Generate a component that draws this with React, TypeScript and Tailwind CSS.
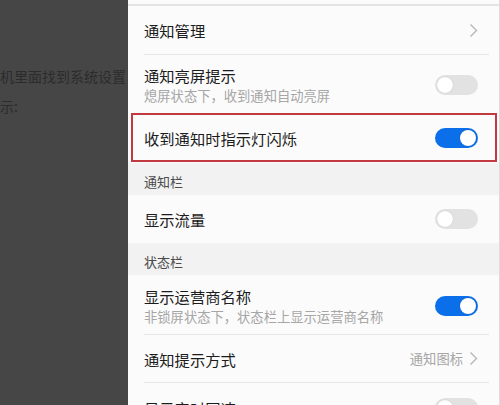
import { ReactNode } from 'react'

const font = { fontFamily: '"Noto Sans CJK SC", "Noto Sans", sans-serif' }

function Toggle({ on }: { on?: boolean }) {
  return (
    <div
      className={`relative w-[43px] h-[20px] rounded-full shrink-0 ${on ? 'bg-[#0b6fe9]' : 'bg-[#e2e2e2]'}`}
    >
      <div
        className={`absolute top-[2px] w-[16px] h-[16px] rounded-full bg-white shadow-[0_0_1px_rgba(0,0,0,0.25)] ${on ? 'right-[2px]' : 'left-[2px]'}`}
      />
    </div>
  )
}

function Chevron() {
  return (
    <svg width="9" height="15" viewBox="0 0 9 15" className="shrink-0">
      <polyline points="1.5,1.5 7.5,7.5 1.5,13.5" fill="none" stroke="#b4b4b4" strokeWidth="1.3" />
    </svg>
  )
}

function Divider() {
  return <div className="shrink-0 ml-4 mr-[10px] h-px bg-[#e6e6e6]" />
}

function Row({
  title,
  sub,
  right,
  className
}: {
  title: string
  sub?: string
  right: ReactNode
  className?: string
}) {
  return (
    <div className={`shrink-0 flex items-center justify-between pl-4 pr-[21px] ${className ?? ''}`}>
      <div className="flex flex-col">
        <span className="text-[15.3px] leading-[20px] text-[#1c1c1c]">{title}</span>
        {sub && <span className="text-[13.3px] leading-[18px] mt-[2px] text-[#a6a6a6]">{sub}</span>}
      </div>
      {right}
    </div>
  )
}

function Section({ label }: { label: string }) {
  return (
    <div className="shrink-0 h-[32px] bg-[#f2f2f2] pl-4 pt-[10px] text-[13px] leading-[18px] text-[#4a4a4a]">
      {label}
    </div>
  )
}

export default function App() {
  return (
    <div className="flex w-[500px] h-[405px] overflow-hidden" style={font}>
      <div className="w-[128px] shrink-0 bg-[#464646] overflow-hidden text-[14px] text-[#2c2c2c] whitespace-nowrap">
        <div className="mt-[66px] leading-[20px]">机里面找到系统设置</div>
        <div className="mt-[10px] leading-[20px]">示:</div>
      </div>

      <div className="flex-1 bg-[#fbfbfb] flex flex-col border-r border-[#dcdcdc]">
        <div className="shrink-0 h-[4px]" />
        <div className="shrink-0 h-[2px] bg-[#e4e4e4]" />
        <Row title="通知管理" right={<Chevron />} className="h-[48px] pr-[18px]" />
        <Divider />
        <Row
          title="通知亮屏提示"
          sub="熄屏状态下，收到通知自动亮屏"
          right={<Toggle />}
          className="h-[57px] pt-[2px]"
        />
        <div className="relative shrink-0">
          <Row title="收到通知时指示灯闪烁" right={<Toggle on />} className="h-[51px]" />
          <div className="absolute left-[3px] right-[2px] top-px bottom-px border-2 border-[#c23a40]" />
        </div>
        <Section label="通知栏" />
        <Row title="显示流量" right={<Toggle />} className="h-[48px]" />
        <Section label="状态栏" />
        <Row
          title="显示运营商名称"
          sub="非锁屏状态下，状态栏上显示运营商名称"
          right={<Toggle on />}
          className="h-[59px] pt-[2px]"
        />
        <Divider />
        <Row
          title="通知提示方式"
          right={
            <div className="flex items-center gap-[6px]">
              <span className="text-[13.3px] text-[#a6a6a6]">通知图标</span>
              <Chevron />
            </div>
          }
          className="h-[47px] pr-[18px]"
        />
        <Divider />
        <Row title="显示实时网速" right={<Toggle />} className="h-[48px] pt-[2px]" />
      </div>
    </div>
  )
}
